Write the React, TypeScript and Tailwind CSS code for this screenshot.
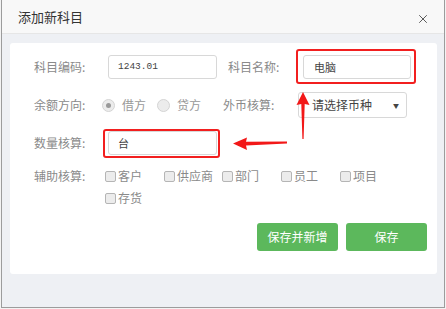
import { X } from "lucide-react"

const cjk = { fontFamily: '"Noto Sans CJK SC", "Noto Sans", sans-serif' }

const auxItems = [
  { label: "客户", w: "w-[59px]" },
  { label: "供应商", w: "w-[58px]" },
  { label: "部门", w: "w-[59px]" },
  { label: "员工", w: "w-[59px]" },
  { label: "项目", w: "w-[59px]" },
]

function Label({ text, className = "" }: { text: string; className?: string }) {
  return <span className={`text-[12px] text-[#8a8a8a] leading-none ${className}`}>{text}</span>
}

function Radio({ checked }: { checked?: boolean }) {
  return (
    <span className="w-[13px] h-[13px] rounded-full border border-[#d4d4d4] bg-[#ececec] flex items-center justify-center">
      {checked && <span className="w-[5px] h-[5px] rounded-full bg-[#9a9a9a]"></span>}
    </span>
  )
}

function Checkbox() {
  return <span className="w-[11px] h-[11px] rounded-[2px] border border-[#b5b5b5] bg-[#ececec] shrink-0"></span>
}

function Highlight({ className }: { className: string }) {
  return <div className={`absolute border-2 border-[#f21f1f] rounded-[3px] pointer-events-none ${className}`}></div>
}

export default function App() {
  return (
    <div className="w-[446px] h-[309px] bg-[#f3f3f3] relative overflow-hidden" style={cjk}>
      <div className="ml-[1px] w-[444px] h-[308px] border-x border-b border-[#9c9c9c] flex flex-col">
        {/* header */}
        <div className="h-[34px] bg-[#f8f8f8] border-b border-[#e6e6e6] flex items-center justify-between pl-[16px] pr-[14px] shrink-0">
          <span className="text-[13px] text-[#333]">添加新科目</span>
          <X size={14} strokeWidth={1.5} className="text-[#444] mt-[4px]" />
        </div>

        {/* body */}
        <div className="flex-1 bg-[#eef0f4] pt-[9px] pl-[8px] pr-[7px]">
          <div className="bg-white rounded-[3px] h-[231px] pl-[24px] pt-[12px] pr-[10px]">
            {/* row 1 */}
            <div className="flex items-center h-[24px]">
              <Label text="科目编码:" className="w-[74px]" />
              <div className="w-[109px] h-[24px] border border-[#d8d8d8] rounded-[3px] flex items-center pl-[9px] text-[9.5px] text-[#444]" style={{ fontFamily: '"Liberation Mono", monospace' }}>
                1243.01
              </div>
              <Label text="科目名称:" className="ml-[11px] w-[75px]" />
              <div className="relative w-[108px] h-[24px] border border-[#d8d8d8] rounded-[3px] flex items-center pl-[10px] text-[11px] text-[#444]">
                电脑
                <Highlight className="-left-[8px] -right-[6px] -top-[7px] -bottom-[6px]" />
              </div>
            </div>

            {/* row 2 */}
            <div className="flex items-center h-[26px] mt-[13px]">
              <Label text="余额方向:" className="w-[68px]" />
              <Radio checked />
              <span className="ml-[7px] text-[12px] text-[#999] leading-none">借方</span>
              <span className="ml-[11px]"><Radio /></span>
              <span className="ml-[7px] text-[12px] text-[#999] leading-none">贷方</span>
              <Label text="外币核算:" className="ml-[22px] w-[75px]" />
              <div className="w-[109px] h-[26px] border border-[#d8d8d8] rounded-[3px] flex items-center justify-between pl-[13px] pr-[7px] text-[12px] text-[#444]">
                请选择币种
                <span className="text-[6px] text-[#444]">▼</span>
              </div>
            </div>

            {/* row 3 */}
            <div className="flex items-center h-[24px] mt-[13px]">
              <Label text="数量核算:" className="w-[74px]" />
              <div className="relative w-[109px] h-[24px] border border-[#d8d8d8] rounded-[3px] flex items-center pl-[9px] text-[11px] text-[#444]">
                台
                <Highlight className="-left-[6px] -right-[4px] -top-[3px] -bottom-[4px]" />
              </div>
            </div>

            {/* row 4 */}
            <div className="flex mt-[11px]">
              <Label text="辅助核算:" className="w-[71px] h-[20px] flex items-center" />
              <div className="flex flex-col gap-[2px]">
                <div className="flex h-[20px] items-center">
                  {auxItems.map(it => (
                    <div key={it.label} className={`flex items-center gap-[2px] ${it.w}`}>
                      <Checkbox />
                      <span className="text-[12px] text-[#8a8a8a] leading-none">{it.label}</span>
                    </div>
                  ))}
                </div>
                <div className="flex h-[20px] items-center gap-[2px]">
                  <Checkbox />
                  <span className="text-[12px] text-[#8a8a8a] leading-none">存货</span>
                </div>
              </div>
            </div>

            {/* buttons */}
            <div className="flex justify-end gap-[8px] mt-[15px]">
              <button className="w-[81px] h-[28px] rounded-[3px] bg-[#5cb85c] text-white text-[12px]">保存并新增</button>
              <button className="w-[81px] h-[28px] rounded-[3px] bg-[#5cb85c] text-white text-[12px]">保存</button>
            </div>
          </div>
        </div>
      </div>

      {/* annotation arrows */}
      <svg className="absolute left-0 top-0 pointer-events-none" width="446" height="309">
        <polygon fill="#f21818" points="303,92 296.5,105 301.3,104 302.4,139 303.6,139 304.7,104 309.5,105" />
        <polygon fill="#f21818" points="233,143.5 247,137.5 246,141.8 287,141.6 287,143.4 246,145.5 247,150" />
      </svg>
    </div>
  )
}
